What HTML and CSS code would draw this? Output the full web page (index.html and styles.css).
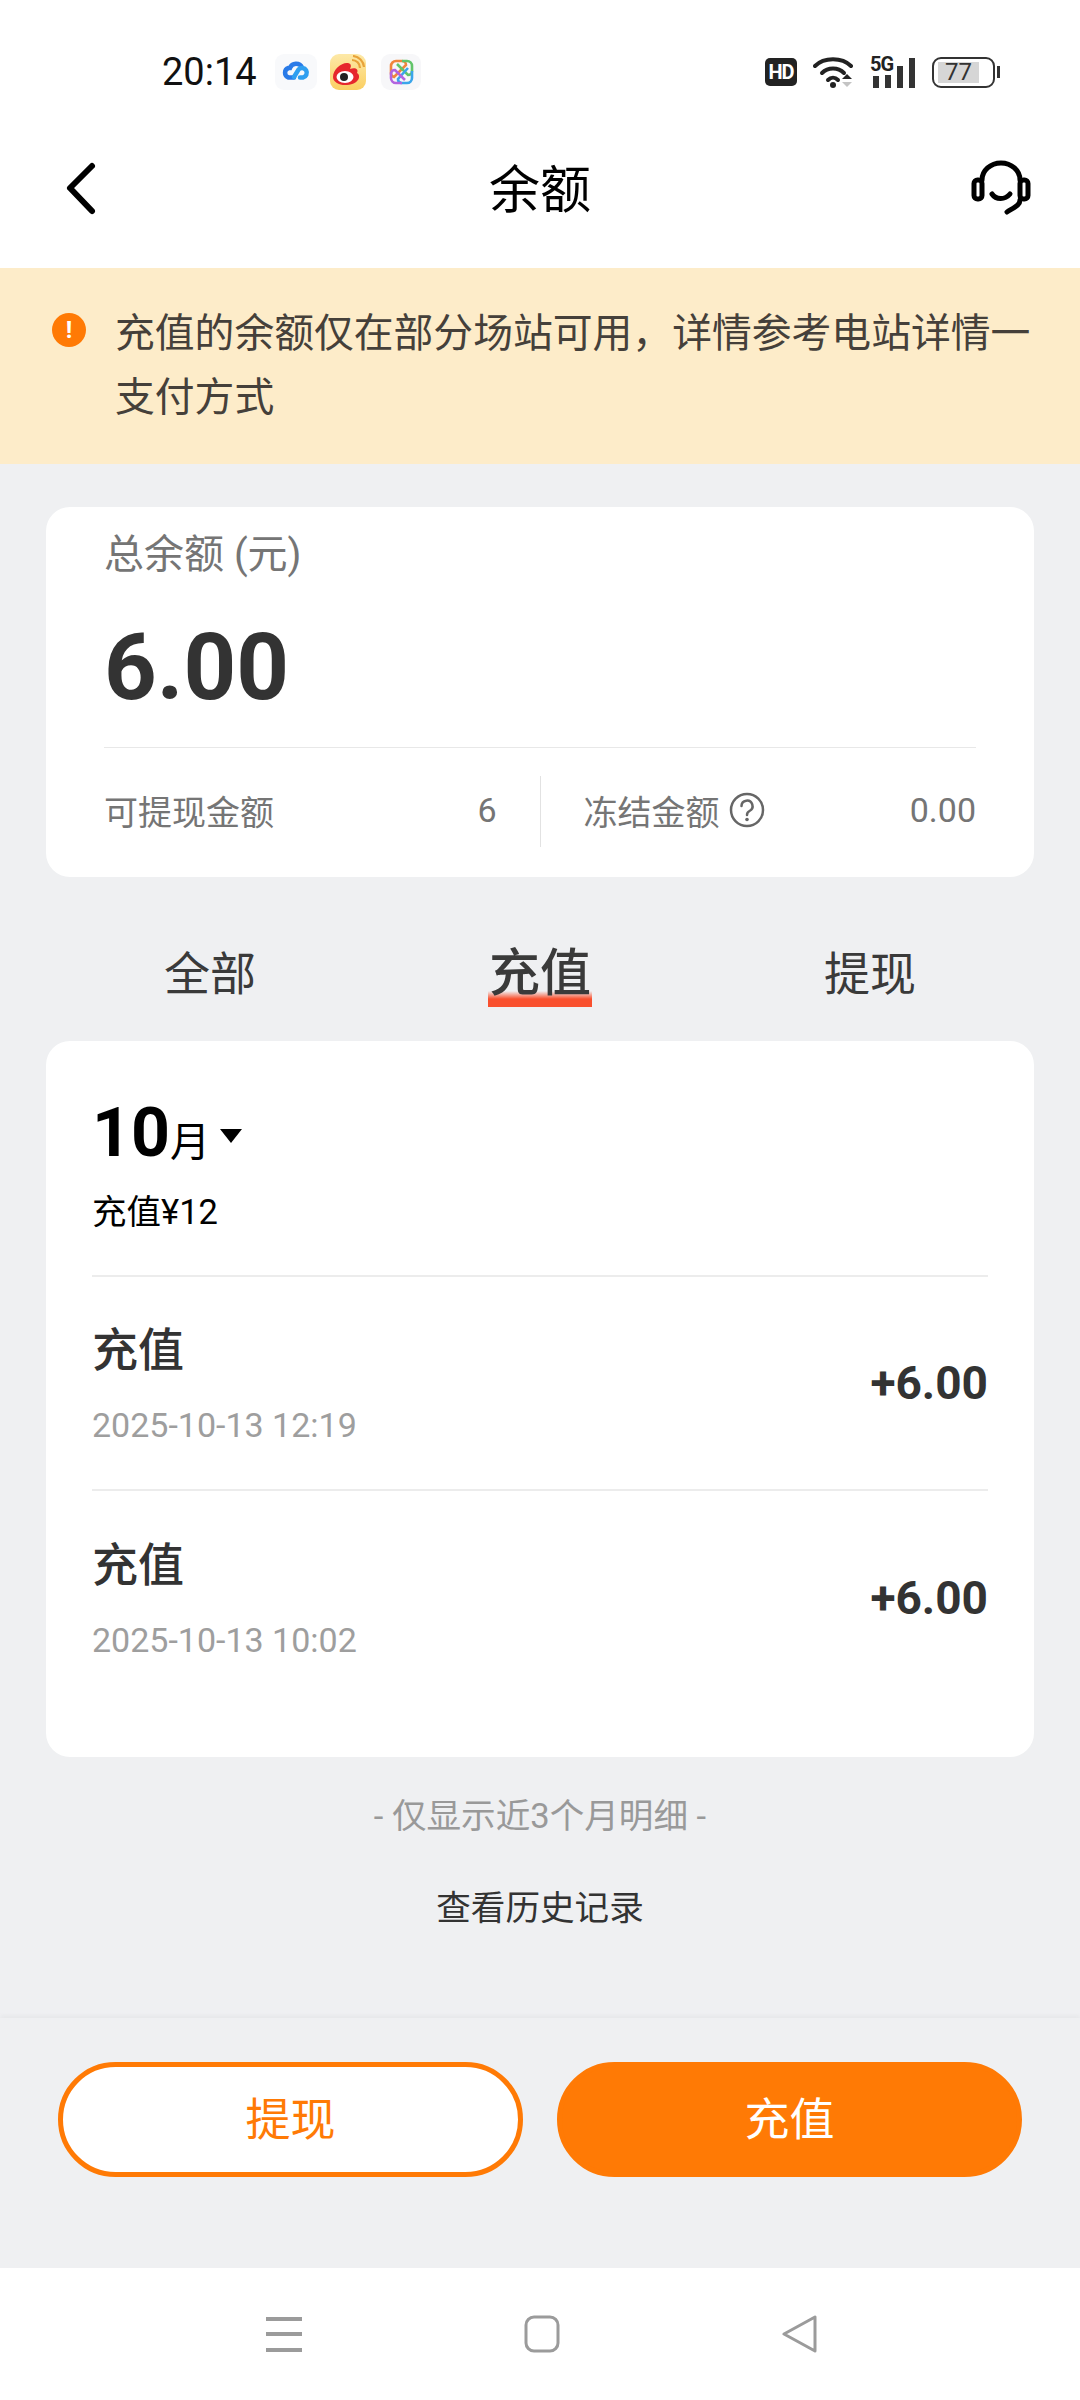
FILE: index.html
```html
<!DOCTYPE html>
<html lang="zh-CN">
<head>
    <meta charset="UTF-8">
    <meta name="viewport" content="width=device-width, initial-scale=1.0">
    <title>余额</title>
    <link rel="stylesheet" href="styles.css">
</head>
<body>
    <div class="page">
        <div class="status-bar">
            <div class="status-left">
                <span class="clock">20:14</span>
                <span class="app-tile tile-cloud">
                    <svg width="30" height="22" viewBox="0 0 30 22" fill="none" stroke-width="4.5" stroke-linecap="round">
                        <path d="M13 16.5 H7.5 A5 5 0 0 1 7.5 7 H9 A6.5 6.5 0 0 1 21 6.5" stroke="#2a7be8"/>
                        <path d="M13 16 L17.5 8.5 A4.8 4.8 0 1 1 22 16.5 H19" stroke="#2f9ff0"/>
                    </svg>
                </span>
                <span class="app-tile tile-weibo">
                    <svg width="36" height="34" viewBox="0 0 36 34" fill="none">
                        <path d="M3 22 C3 14 12 7 18 8 C22 9 21 12 20 14 C25 12 29 14 27 18 C31 20 30 29 17 30 C9 30.500 3 27 3 22 Z" fill="#e6272d"/>
                        <ellipse cx="15" cy="22" rx="8.500" ry="6" fill="#fff"/>
                        <circle cx="14" cy="22" r="4" fill="#222"/>
                        <path d="M22 5 A8 8 0 0 1 30 13 M23 1 A12 12 0 0 1 34 12" stroke="#e8a33a" stroke-width="2.200"/>
                    </svg>
                </span>
                <span class="app-tile tile-spark">
                    <svg width="26" height="26" viewBox="0 0 26 26" fill="none" stroke-width="2.600">
                        <path d="M8 2 H14 A4 4 0 0 1 18 6 L6 18 A4 4 0 0 1 3 14 V7 A5 5 0 0 1 8 2 Z" stroke="#f0863c"/>
                        <path d="M14 2 H19 A5 5 0 0 1 24 7 V12 A4 4 0 0 1 20 16 L9 5" stroke="#62c46a"/>
                        <path d="M24 12 V19 A5 5 0 0 1 19 24 H13 A4 4 0 0 1 10 20 L20 9" stroke="#3aa5ea"/>
                        <path d="M14 24 H8 A5 5 0 0 1 3 19 V14 A4 4 0 0 1 7 11 L17 21" stroke="#b264e0"/>
                    </svg>
                </span>
            </div>
            <div class="status-right">
                <span class="hd-badge">HD</span>
                <svg class="wifi" width="41" height="34" viewBox="0 0 41 34" fill="none" stroke="#222" stroke-width="4" stroke-linecap="round">
                    <path d="M2 11 C11 2 29 2 38 11"/>
                    <path d="M9 18 C15 12 25 12 31 18"/>
                    <path d="M15 25 C18 22 22 22 25 25"/>
                    <circle cx="20" cy="30" r="3" fill="#222" stroke="none"/>
                    <path d="M29 24 L34 19 L39 24 Z" fill="#222" stroke="none"/>
                    <path d="M29 27 L39 27 L34 32 Z" fill="#c4c4c4" stroke="none"/>
                </svg>
                <span class="signal">
                    <span class="signal-label">5G</span>
                    <svg width="46" height="34" viewBox="0 0 46 34">
                        <rect x="3" y="21" width="6" height="12" fill="#333"/>
                        <rect x="15" y="20" width="6" height="13" fill="#333"/>
                        <rect x="27" y="11" width="6" height="22" fill="#333"/>
                        <rect x="39" y="3" width="6" height="30" fill="#333"/>
                    </svg>
                </span>
                <span class="battery"><span class="battery-level">77</span></span>
            </div>
        </div>

        <div class="nav-bar">
            <svg class="nav-back" width="60" height="60" viewBox="0 0 60 60" fill="none" stroke="#000" stroke-width="6" stroke-linecap="round" stroke-linejoin="round">
                <path d="M50 7 L28 29 L50 52"/>
            </svg>
            <span class="nav-title">余额</span>
            <svg class="nav-service" width="64" height="60" viewBox="0 0 64 60" fill="none" stroke="#000" stroke-width="5" stroke-linecap="round">
                <path d="M13 21 A19 17 0 0 1 51 21"/>
                <rect x="5" y="21" width="8" height="19" rx="3.500"/>
                <rect x="51" y="21" width="8" height="19" rx="3.500"/>
                <path d="M23 35 C27 41 36 41 41 35"/>
                <path d="M51 41 C51 46 46 48 38 53"/>
            </svg>
        </div>

        <div class="notice">
            <span class="notice-icon">!</span>
            <p class="notice-text">充值的余额仅在部分场站可用，详情参考电站详情一支付方式</p>
        </div>

        <main class="content">
            <section class="card balance">
                <div class="balance-label">总余额 (元)</div>
                <div class="balance-value">6.00</div>
                <div class="balance-stats">
                    <div class="stat">
                        <span>可提现金额</span>
                        <span>6</span>
                    </div>
                    <div class="stat-divider"></div>
                    <div class="stat">
                        <span class="stat-name">冻结金额
                            <svg width="36" height="36" viewBox="0 0 36 36" fill="none" stroke="#666" stroke-width="2.500" stroke-linecap="round">
                                <circle cx="18" cy="18" r="16"/>
                                <path d="M12.500 14 A5.500 5.500 0 1 1 20.500 19 C18.500 20 18 21 18 23"/>
                                <circle cx="18" cy="27.500" r="1.800" fill="#666" stroke="none"/>
                            </svg>
                        </span>
                        <span>0.00</span>
                    </div>
                </div>
            </section>

            <div class="tabs">
                <span class="tab">全部</span>
                <span class="tab active"><span class="tab-mark">充值</span></span>
                <span class="tab">提现</span>
            </div>

            <section class="card records">
                <div class="month-head">
                    <div class="month">
                        <b>10</b><span class="month-unit">月</span><span class="month-arrow"></span>
                    </div>
                    <div class="month-sum">充值¥12</div>
                </div>
                <div class="record">
                    <div>
                        <div class="record-title">充值</div>
                        <div class="record-time">2025-10-13 12:19</div>
                    </div>
                    <div class="record-amount">+6.00</div>
                </div>
                <div class="record">
                    <div>
                        <div class="record-title">充值</div>
                        <div class="record-time">2025-10-13 10:02</div>
                    </div>
                    <div class="record-amount">+6.00</div>
                </div>
            </section>

            <p class="list-note">- 仅显示近3个月明细 -</p>
            <p class="history-link">查看历史记录</p>
        </main>

        <div class="actions">
            <button class="btn btn-outline">提现</button>
            <button class="btn btn-solid">充值</button>
        </div>

        <div class="system-nav">
            <svg width="38" height="38" viewBox="0 0 38 38" fill="#9b9b9b">
                <rect x="1" y="2" width="36" height="4"/>
                <rect x="1" y="17" width="36" height="4"/>
                <rect x="1" y="33" width="36" height="4"/>
            </svg>
            <svg width="38" height="38" viewBox="0 0 38 38" fill="none" stroke="#9b9b9b" stroke-width="3">
                <rect x="3" y="2" width="32" height="34" rx="8"/>
            </svg>
            <svg width="38" height="38" viewBox="0 0 38 38" fill="none" stroke="#9b9b9b" stroke-width="3" stroke-linejoin="round">
                <path d="M34 2 V36 L3 19 Z"/>
            </svg>
        </div>
    </div>
</body>
</html>
```

FILE: styles.css
```css
* {
    box-sizing: border-box;
}

body {
    margin: 0;
    font-family: Roboto, "Noto Sans CJK SC", sans-serif;
    color: #333;
}

p {
    margin: 0;
}

.page {
    display: flex;
    flex-direction: column;
    width: 1080px;
    height: 2400px;
    background-color: #eff0f2;
    overflow: hidden;
}

/* status bar */
.status-bar {
    display: flex;
    justify-content: space-between;
    align-items: center;
    height: 130px;
    padding: 14px 85px 0 162px;
    background-color: #fff;
}

.status-left,
.status-right {
    display: flex;
    align-items: center;
}

.clock {
    font-size: 38px;
    color: #111;
    margin-right: 18px;
}

.app-tile {
    display: flex;
    justify-content: center;
    align-items: center;
    width: 36px;
    height: 36px;
    border-radius: 9px;
    margin-right: 15px;
}

.tile-cloud {
    width: 42px;
    margin-right: 13px;
    background-color: #f8f9fb;
}

.tile-weibo {
    background: linear-gradient(#fde9a8, #fbcf62);
}

.tile-spark {
    width: 40px;
    background-color: #f7f7f9;
}

.hd-badge {
    display: flex;
    justify-content: center;
    align-items: center;
    width: 32px;
    height: 28px;
    margin-right: 16px;
    border-radius: 5px;
    background-color: #222;
    color: #fff;
    font-size: 20px;
    font-weight: 700;
    letter-spacing: -1px;
}

.wifi {
    margin-right: 16px;
}

/* 5G label sits over the two short bars */
.signal {
    position: relative;
    display: block;
    height: 34px;
    margin-right: 16px;
}

.signal svg {
    display: block;
}

.signal-label {
    position: absolute;
    top: -1px;
    left: 0;
    font-size: 20px;
    font-weight: 700;
    line-height: 20px;
    letter-spacing: -1px;
    color: #222;
}

.battery {
    position: relative;
    display: block;
    width: 63px;
    height: 31px;
    padding: 3px 4px;
    border: 2.5px solid #333;
    border-radius: 9px;
}

.battery::after {
    content: "";
    position: absolute;
    top: 7px;
    right: -7px;
    width: 3px;
    height: 12px;
    background-color: #333;
}

.battery-level {
    display: block;
    width: 41px;
    height: 100%;
    background-color: #d6d6d6;
    font-size: 24px;
    line-height: 20px;
    text-align: center;
}

/* title bar */
.nav-bar {
    display: grid;
    grid-template-columns: 1fr auto 1fr;
    align-items: center;
    height: 138px;
    padding: 0 47px 20px;
    background-color: #fff;
}

.nav-back {
    margin-left: -5px;
}

.nav-service {
    justify-self: end;
}

.nav-title {
    padding-bottom: 6px;
    font-size: 51px;
    color: #000;
}

/* notice */
.notice {
    display: flex;
    height: 196px;
    padding: 34px 30px 0 52px;
    background-color: #fdecc9;
}

.notice-icon {
    flex: none;
    width: 34px;
    height: 34px;
    margin: 11px 0 0;
    border-radius: 50%;
    background-color: #ff7a05;
    color: #fff;
    font-size: 24px;
    font-weight: 700;
    line-height: 34px;
    text-align: center;
}

.notice-text {
    margin-left: 29px;
    font-size: 39.8px;
    line-height: 64px;
    color: #45403a;
}

/* main */
.content {
    flex: 1;
    padding: 43px 46px 0;
}

.card {
    border-radius: 24px;
    background-color: #fff;
}

.balance {
    height: 370px;
    padding: 24px 58px 0;
}

.balance-label {
    font-size: 40px;
    line-height: 48px;
    color: #757575;
}

.balance-value {
    margin-top: 29px;
    font-size: 92px;
    font-weight: 700;
    line-height: 120px;
    color: #333;
}

.balance-stats {
    display: grid;
    grid-template-columns: 1fr 1px 1fr;
    column-gap: 43px;
    align-items: center;
    margin-top: 19px;
    padding-top: 28px;
    border-top: 1px solid #e8e8e8;
}

.stat {
    display: flex;
    justify-content: space-between;
    align-items: center;
    padding-bottom: 3px;
    font-size: 34px;
    color: #757575;
}

.stat-name {
    display: flex;
    align-items: center;
    gap: 9px;
}

.stat-divider {
    height: 71px;
    background-color: #e2e2e2;
}

/* tabs */
.tabs {
    display: grid;
    grid-template-columns: repeat(3, 330px);
    justify-content: center;
    align-items: center;
    height: 164px;
    padding-top: 30px;
    text-align: center;
}

.tab {
    font-size: 46px;
    line-height: 66px;
    color: #3a3a3a;
}

.tab.active {
    font-size: 51px;
    font-weight: 500;
}

.tab-mark {
    display: inline-block;
    padding: 0 1px;
    background: linear-gradient(rgba(249, 80, 46, 0), #f9502e 50%) no-repeat bottom / 100% 16px;
}

/* records */
.records {
    height: 716px;
    padding: 52px 46px 0;
}

.month-head {
    height: 184px;
    border-bottom: 2px solid #ececec;
}

.month {
    display: flex;
    align-items: baseline;
    height: 80px;
    color: #000;
}

.month b {
    font-size: 68px;
    line-height: 80px;
    font-weight: 700;
}

.month-unit {
    font-size: 40px;
}

.month-arrow {
    align-self: center;
    width: 0;
    height: 0;
    margin: 5px 0 0 10px;
    border-top: 14px solid #000;
    border-left: 11px solid transparent;
    border-right: 11px solid transparent;
}

.month-sum {
    margin-top: 15px;
    font-size: 34.5px;
    line-height: 48px;
    color: #000;
}

.record {
    display: flex;
    justify-content: space-between;
    align-items: center;
    height: 214px;
    border-bottom: 2px solid #ececec;
}

.record:last-child {
    border-bottom: none;
}

.record-title {
    font-size: 46px;
    font-weight: 500;
    line-height: 60px;
    color: #333;
}

.record-time {
    margin-top: 23px;
    font-size: 34px;
    line-height: 44px;
    color: #9e9e9e;
}

.record-amount {
    font-size: 46px;
    font-weight: 700;
    color: #333;
}

.list-note {
    margin-top: 35px;
    font-size: 34.6px;
    line-height: 48px;
    text-align: center;
    color: #999;
}

.history-link {
    margin-top: 44px;
    font-size: 34.6px;
    line-height: 48px;
    text-align: center;
    color: #333;
}

/* bottom buttons */
.actions {
    display: flex;
    gap: 34px;
    height: 250px;
    padding: 44px 58px 0;
    box-shadow: 0 -3px 4px rgba(0, 0, 0, 0.03);
}

.btn {
    flex: 1;
    height: 115px;
    padding: 0 0 6px;
    border-radius: 58px;
    border: 5px solid #ff7a05;
    font-family: inherit;
    font-size: 45px;
}

.btn-outline {
    background-color: #fff;
    color: #ff7a05;
}

.btn-solid {
    background-color: #ff7a05;
    color: #fff;
}

/* system navigation */
.system-nav {
    display: grid;
    grid-template-columns: repeat(3, 258px);
    justify-content: center;
    justify-items: center;
    align-items: center;
    height: 132px;
    padding-left: 4px;
    background-color: #fff;
}
```
